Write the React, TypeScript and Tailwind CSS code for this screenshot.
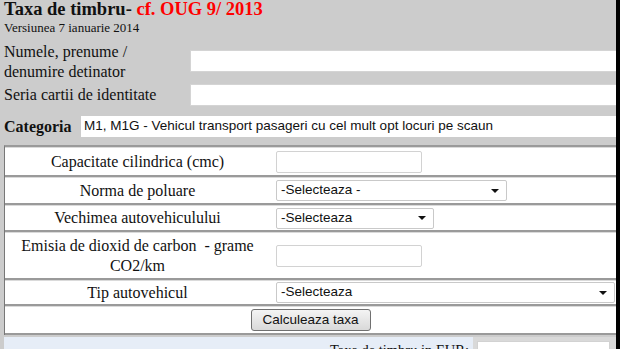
import React from 'react'

function Arrow() {
  return (
    <svg width="8" height="4" viewBox="0 0 8 4" className="shrink-0">
      <path d="M0 0h8L4 4z" fill="#111" />
    </svg>
  )
}

function FakeSelect({ label, width }: { label: string; width: string }) {
  return (
    <div
      className={`${width} h-[21px] flex items-center justify-between bg-white border border-[#c9c9c9] rounded-[2px] pl-[4px] pr-[7px] font-['Liberation_Sans',Arial,sans-serif] text-[13.5px] text-[#111]`}>
      <span>{label}</span>
      <Arrow />
    </div>
  )
}

function TextBox() {
  return <div className="w-[146px] h-[22px] bg-white border border-[#d2d2d2] rounded-[2px]" />
}

export default function App() {
  const rows = [
    { label: 'Capacitate cilindrica (cmc)', h: 'h-[30px]', field: <TextBox /> },
    { label: 'Norma de poluare', h: 'h-[28px]', field: <FakeSelect label="-Selecteaza -" width="w-[231px]" /> },
    { label: 'Vechimea autovehiculului', h: 'h-[27px]', field: <FakeSelect label="-Selecteaza" width="w-[158px]" /> },
    {
      label: 'Emisia de dioxid de carbon\u00a0 - grame CO2/km',
      h: 'h-[48px]',
      field: <TextBox />
    },
    { label: 'Tip autovehicul', h: 'h-[26px]', field: <FakeSelect label="-Selecteaza" width="flex-1 mr-[1px]" /> }
  ]

  return (
    <div className="flex h-[349px] w-[620px] overflow-hidden bg-[#cccccc] text-[#111] font-['Liberation_Serif','Times_New_Roman',serif]">
      <div className="flex-1 min-w-0">
        <h1 className="pl-[4px] text-[18.5px] leading-[18px] font-bold whitespace-nowrap">
          Taxa de timbru- <span className="text-[#ff0000]">cf. OUG 9/ 2013</span>
        </h1>
        <div className="mt-[2px] pl-[4px] text-[13px] leading-[16px]">Versiunea 7 ianuarie 2014</div>

        <div className="mt-[6px] pl-[4px] flex text-[16px] leading-[20px]">
          <div className="w-[186px] shrink-0">
            Numele, prenume /
            <br />
            denumire detinator
          </div>
          <div className="mt-[8px] h-[22px] flex-1 bg-white border border-[#d4d4d4] border-r-0" />
        </div>

        <div className="mt-[2px] pl-[4px] flex items-center h-[22px] text-[16px] leading-[20px]">
          <div className="w-[186px] shrink-0">Seria cartii de identitate</div>
          <div className="h-full flex-1 bg-white border border-[#d4d4d4] border-r-0" />
        </div>

        <div className="mt-[9px] pl-[4px] flex items-center h-[23px]">
          <div className="w-[76px] shrink-0 text-[16px] leading-[20px] font-bold">Categoria</div>
          <div className="h-full flex-1 flex items-center bg-white border border-[#cccccc] border-r-0 pl-[3px] font-['Liberation_Sans',Arial,sans-serif] text-[13.5px] whitespace-nowrap overflow-hidden">
            M1, M1G - Vehicul transport pasageri cu cel mult opt locuri pe scaun
          </div>
        </div>

        <div className="mt-[7px] ml-[4px] bg-white border-l border-l-[#777] border-t-2 border-t-[#9a9a9a]">
          {rows.map((row, index) => (
            <div
              key={index}
              className={`${row.h} flex border-t border-t-[#dadada] border-b-2 border-b-[#9a9a9a]`}>
              <div className="w-[265px] shrink-0 flex items-center justify-center text-center text-[16px] leading-[20px] px-[4px]">
                {row.label}
              </div>
              <div className="flex-1 flex items-center pl-[6px]">{row.field}</div>
            </div>
          ))}
          <div className="h-[29px] flex items-center justify-center border-t border-t-[#dadada] border-b-2 border-b-[#9a9a9a]">
            <button className="w-[120px] h-[22px] rounded-[3px] border border-[#707070] bg-gradient-to-b from-[#f4f4f4] to-[#d9d9d9] font-['Liberation_Sans',Arial,sans-serif] text-[13.5px] text-[#111]">
              Calculeaza taxa
            </button>
          </div>
        </div>

        <div className="mt-[2px] ml-[4px] flex h-[30px]">
          <div className="w-[469px] shrink-0 bg-[#e6edf7] text-right pr-[4px] pt-[3px] text-[14.5px] leading-[20px] whitespace-nowrap">
            Taxa de timbru in EUR:
          </div>
          <div className="flex-1 bg-[#d9d9d9] pt-[4px] pl-[4px] pr-[6px]">
            <div className="h-full bg-white border border-[#d2d2d2]" />
          </div>
        </div>
      </div>
      <div className="w-[4px] shrink-0 bg-black" />
    </div>
  )
}
